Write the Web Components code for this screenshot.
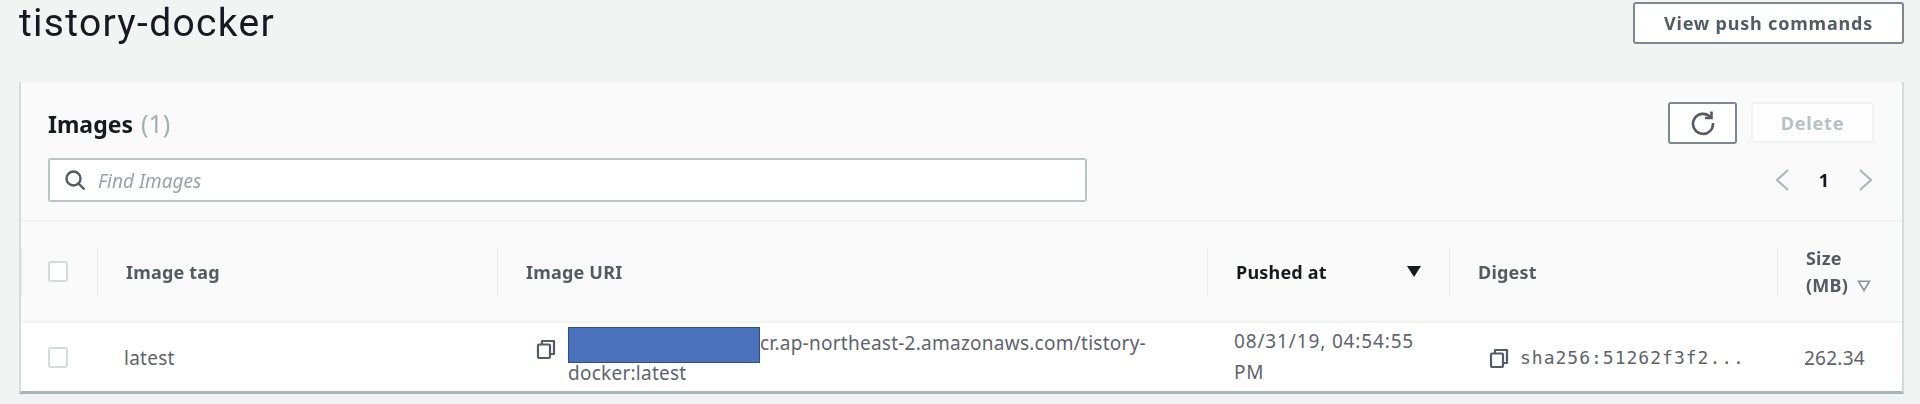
<!DOCTYPE html>
<html><head><meta charset="utf-8"><style>
html,body{margin:0;padding:0;background:#f2f3f3;}
body{font-family:"Noto Sans",sans-serif;color:#16191f;width:1920px;height:404px;overflow:hidden;}
</style></head><body>
<ecr-page></ecr-page>
<script>
function def(name, css, html){
  customElements.define(name, class extends HTMLElement{
    constructor(){super();const r=this.attachShadow({mode:'open'});r.innerHTML='<style>'+css+'</style>'+html;}
  });
}
const COPY='<svg width="22" height="22" viewBox="0 0 22 22" fill="none" stroke="#545b64" stroke-width="2.2" stroke-linejoin="round"><path d="M7 6V3h12v13h-4"/><rect x="3" y="6.5" width="12" height="13.5" rx="1"/></svg>';
def('aws-button',`:host{display:inline-flex;box-sizing:border-box;align-items:center;justify-content:center;background:#fff;border:2px solid #7d8791;border-radius:3px;color:#545b64;font-weight:700;font-size:18px;letter-spacing:.8px;}
:host([disabled]){border-color:#f1f3f3;color:#b7c0c2;background:#fdfdfd;}`,'<slot></slot>');
def('check-box',`:host{display:block;box-sizing:border-box;width:20px;height:21px;background:#fff;border:2px solid #d5dbdb;border-radius:3px;margin-top:-2px;}`,'');
def('copy-icon',`:host{display:inline-flex;width:22px;height:22px;}`,COPY);
def('sort-arrow',`:host{display:inline-block;width:0;height:0;border-left:7px solid transparent;border-right:7px solid transparent;border-top:11px solid #16191f;}`,'');
def('sort-hollow',`:host{display:inline-flex;width:14px;height:12px;}`,'<svg width="14" height="12" viewBox="0 0 14 12" fill="none" stroke="#879596" stroke-width="1.6"><path d="M1.5 1.2h11L7 10.5z"/></svg>');
def('head-cell',`:host{display:flex;align-items:center;position:relative;box-sizing:border-box;height:100%;padding:1px 0 0 29px;font-weight:700;font-size:18px;letter-spacing:.2px;color:#545b64;line-height:27px;}
:host([active]){color:#16191f;}
:host(:not(:first-child))::before{content:"";position:absolute;left:0;top:26px;height:48px;width:1px;background:#eaeded;}`,'<slot></slot>');
def('body-cell',`:host{display:flex;align-items:center;box-sizing:border-box;height:100%;padding-top:2px;font-size:19px;letter-spacing:.25px;color:#5d646d;line-height:32px;}`,'<slot></slot>');
def('page-header',`:host{display:flex;justify-content:space-between;align-items:flex-start;height:82px;}
h1{margin:0;font-family:Roboto,"Noto Sans",sans-serif;font-weight:400;font-size:39px;line-height:46px;letter-spacing:1.3px;color:#16191f;}
aws-button{width:271px;height:42px;margin-top:2px;}`,
'<h1>tistory-docker</h1><aws-button>View push commands</aws-button>');
def('images-toolbar',`:host{display:flex;justify-content:space-between;box-sizing:border-box;height:140px;padding:20px 28px 0 27px;border-bottom:2px solid #f2f3f3;}
.l{display:flex;flex-direction:column;}
h2{margin:1px 0 -1px;font-size:23px;line-height:40px;font-weight:700;color:#16191f;}
h2 span{font-weight:400;color:#a3b0b1;margin-left:2px;font-size:25px;}
.search{box-sizing:border-box;margin-top:15px;width:1039px;height:44px;background:#fff;border:2px solid #bac4c5;border-radius:3px;display:flex;align-items:center;padding-left:14px;gap:12px;font-style:italic;font-size:19px;color:#98a4a5;}
.search span{position:relative;top:1px;}
.r{display:flex;flex-direction:column;align-items:flex-end;}
.btns{display:flex;gap:14px;}
.btns aws-button:first-child{width:69px;height:42px;}
.btns aws-button:last-child{width:123px;height:41px;}
.pager{display:flex;align-items:center;gap:30px;margin:16px 1px 0 0;height:40px;font-weight:700;font-size:18px;color:#16191f;}`,
`<div class="l"><h2>Images <span>(1)</span></h2><div class="search"><svg width="22" height="22" viewBox="0 0 22 22" fill="none" stroke="#545b64" stroke-width="2.4"><circle cx="9.5" cy="9.5" r="7"/><path d="M14.5 14.5l6 6"/></svg><span>Find Images</span></div></div>
<div class="r"><div class="btns"><aws-button><svg width="26" height="26" viewBox="0 0 26 26" fill="none" stroke="#545b64" stroke-width="2.6"><path d="M20.5 7.2A10 10 0 1 0 23 13"/><path d="M21.5 1.5v6.5H15"/></svg></aws-button><aws-button disabled>Delete</aws-button></div>
<div class="pager"><svg width="14" height="24" viewBox="0 0 14 24" fill="none" stroke="#aab7b8" stroke-width="2.2"><path d="M13 2L2 12l11 10"/></svg><span>1</span><svg width="14" height="24" viewBox="0 0 14 24" fill="none" stroke="#aab7b8" stroke-width="2.2"><path d="M1 2l11 10L1 22"/></svg></div></div>`);
def('images-table',`:host{display:grid;grid-template-columns:76px 400px 710px 242px 328px 124px;grid-template-rows:99px 70px;}
.row{background:#fff;border-top:2px solid #f2f3f3;}
.chk{display:flex;align-items:center;padding-left:27px;box-sizing:border-box;}
.uri{display:flex;gap:11px;padding:0 0 0 38px;box-sizing:border-box;align-items:flex-start;}
.uri copy-icon{margin-top:15px;}
.uri div{width:600px;line-height:30px;padding-top:5px;position:relative;}
.red{display:inline-block;width:192px;height:1px;position:relative;}
.red i{position:absolute;left:0;top:-22px;width:192px;height:36px;box-sizing:border-box;background:#4a72bd;border:1px solid #2f528f;}
.push{padding-left:27px;padding-top:0;}
.push div{width:200px;line-height:31px;letter-spacing:.85px;}
.dig{padding-left:39px;gap:10px;}
.dig span{font-family:"DejaVu Sans Mono",monospace;font-size:18px;letter-spacing:1px;}
.sz{padding-left:27px;}
sort-arrow{position:absolute;left:200px;top:44px;}
.szh sort-hollow{margin-left:9px;}`,
`<head-cell class="chk"><check-box></check-box></head-cell>
<head-cell>Image tag</head-cell><head-cell>Image URI</head-cell>
<head-cell active>Pushed at<sort-arrow></sort-arrow></head-cell><head-cell>Digest</head-cell>
<head-cell class="szh"><div>Size<br>(MB)<sort-hollow></sort-hollow></div></head-cell>
<body-cell class="row chk"><check-box></check-box></body-cell>
<body-cell class="row" style="padding-left:27px">latest</body-cell>
<body-cell class="row uri"><copy-icon></copy-icon><div><span class="red"><i></i></span>cr.ap-northeast-2.amazonaws.com/tistory-docker:latest</div></body-cell>
<body-cell class="row push"><div>08/31/19, 04:54:55 PM</div></body-cell>
<body-cell class="row dig"><copy-icon></copy-icon><span>sha256:51262f3f2...</span></body-cell>
<body-cell class="row sz">262.34</body-cell>`);
def('images-card',`:host{display:block;box-sizing:border-box;height:312px;background:#fafafa;border:2px solid #d5dbdb;border-top:0;border-bottom:3px solid #aab7b8;}`,
'<images-toolbar></images-toolbar><images-table></images-table>');
def('ecr-page',`:host{display:block;padding:0 16px 0 19px;height:404px;box-sizing:border-box;filter:blur(.7px);}`,
'<page-header></page-header><images-card></images-card>');
</script>
</body></html>
